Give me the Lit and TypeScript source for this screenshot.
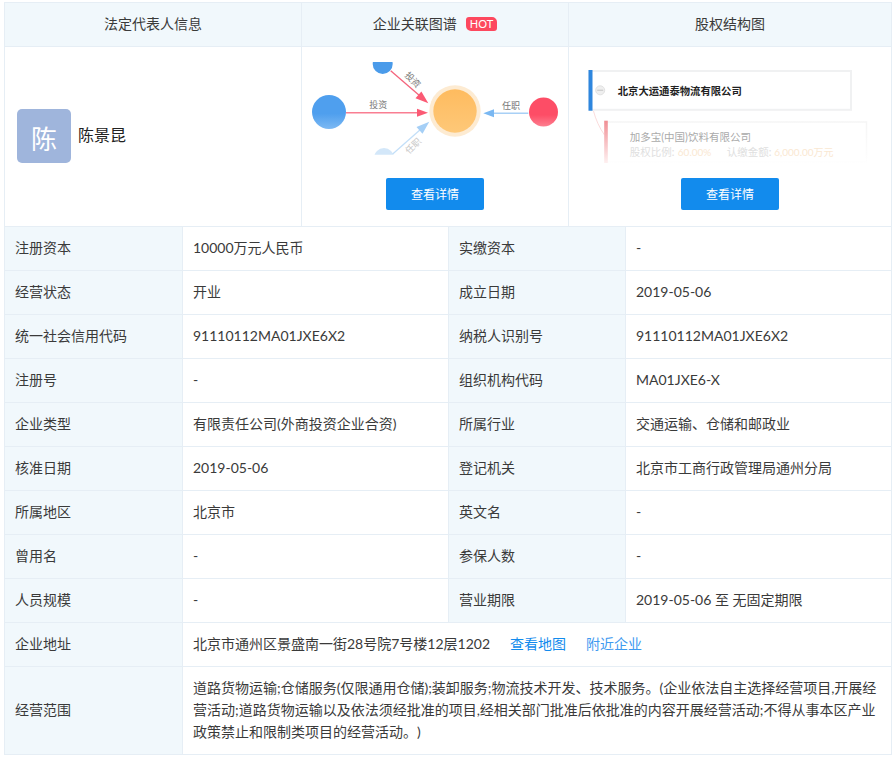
import { LitElement, html, css, svg } from "lit";
import { customElement } from "lit/decorators.js";

const rows: [string, string, string, string][] = [
  ["注册资本", "10000万元人民币", "实缴资本", "-"],
  ["经营状态", "开业", "成立日期", "2019-05-06"],
  ["统一社会信用代码", "91110112MA01JXE6X2", "纳税人识别号", "91110112MA01JXE6X2"],
  ["注册号", "-", "组织机构代码", "MA01JXE6-X"],
  ["企业类型", "有限责任公司(外商投资企业合资)", "所属行业", "交通运输、仓储和邮政业"],
  ["核准日期", "2019-05-06", "登记机关", "北京市工商行政管理局通州分局"],
  ["所属地区", "北京市", "英文名", "-"],
  ["曾用名", "-", "参保人数", "-"],
  ["人员规模", "-", "营业期限", "2019-05-06 至 无固定期限"],
];

const graph = svg`
  <defs>
    <linearGradient id="gb" x1="0" y1="0" x2="0" y2="1"><stop offset="0.55" stop-color="#4f9fee"/><stop offset="1" stop-color="#7db9f3"/></linearGradient>
    <linearGradient id="gr" x1="0" y1="0" x2="0" y2="1"><stop offset="0.6" stop-color="#fd4d66"/><stop offset="1" stop-color="#fd7f90"/></linearGradient>
    <linearGradient id="go" x1="0" y1="0" x2="0" y2="1"><stop offset="0" stop-color="#febb5f"/><stop offset="1" stop-color="#fec878"/></linearGradient>
    <clipPath id="topclip"><rect x="60" y="15" width="40" height="20"/></clipPath>
    <clipPath id="botclip"><rect x="60" y="95" width="40" height="12.700"/></clipPath>
  </defs>
  <circle cx="80.700" cy="17" r="10" fill="#4a9bea" clip-path="url(#topclip)"/>
  <circle cx="82" cy="111" r="10" fill="#d3e7f9" clip-path="url(#botclip)"/>
  <circle cx="27" cy="65" r="17" fill="url(#gb)"/>
  <circle cx="241.500" cy="65" r="14.500" fill="url(#gr)"/>
  <circle cx="153" cy="64" r="25.700" fill="#fdebd2"/>
  <circle cx="153" cy="64" r="21.700" fill="url(#go)"/>
  <line x1="44" y1="65.700" x2="118" y2="65.700" stroke="#f97e92" stroke-width="1.600"/>
  <polygon points="126,65.700 115,61.700 115,69.700" fill="#fb5a74"/>
  <line x1="88.700" y1="23.700" x2="118" y2="49" stroke="#f4647c" stroke-width="1.300"/>
  <polygon points="126.300,56.300 113.500,51.200 119.400,44.400" fill="#fb5a74"/>
  <line x1="90.700" y1="107" x2="119" y2="82" stroke="#c3dff8" stroke-width="1.300"/>
  <polygon points="127.300,74.700 114.500,79.900 120.500,86.700" fill="#a5cff6"/>
  <line x1="226.300" y1="66.300" x2="188" y2="66.300" stroke="#a8d0f6" stroke-width="1.600"/>
  <polygon points="181.300,66.300 192,62.300 192,70.300" fill="#7ab8f2"/>
  <text class="gt" x="76.300" y="61" text-anchor="middle">投资</text>
  <text class="gt" x="209" y="62" text-anchor="middle">任职</text>
  <text class="gt" x="110.700" y="36" text-anchor="middle" transform="rotate(45 110.700 33)">投资</text>
  <text class="gt light" x="111.300" y="102" text-anchor="middle" transform="rotate(-45 111.300 99)">任职</text>
`;

const equity = svg`
  <defs>
    <linearGradient id="fade" x1="0" y1="0" x2="0" y2="1"><stop offset="0" stop-color="#f08e94"/><stop offset="1" stop-color="#fef0f0"/></linearGradient>
    <linearGradient id="fadeb" x1="0" y1="0" x2="0" y2="1"><stop offset="0" stop-color="#f5f5f5"/><stop offset="1" stop-color="#fefefe"/></linearGradient>
  </defs>
  <rect x="20" y="24" width="261.500" height="38.800" fill="#fff" stroke="#f0f1f2" stroke-width="2"/>
  <rect x="19" y="23" width="4" height="40.700" fill="#2e86de"/>
  <circle cx="30.700" cy="43.300" r="4.500" fill="#efefef" stroke="#e2e2e2"/>
  <rect x="27.700" y="42.600" width="6" height="1.400" fill="#d0d0d0"/>
  <path d="M24 64 C26 72 30 81 35 88" fill="none" stroke="#fbdcdc"/>
  <rect x="36" y="75" width="261" height="40" fill="#fff" stroke="url(#fadeb)" stroke-width="1.500"/>
  <rect x="34.700" y="73.700" width="3.600" height="42.300" fill="url(#fade)"/>
  <text class="eq1" x="48.300" y="48.400">北京大运通泰物流有限公司</text>
  <text class="eq2" x="60.300" y="94">加多宝(中国)饮料有限公司</text>
  <text class="eq3" x="60.300" y="109">股权比例:</text>
  <text class="eq4" x="108.300" y="109">60.00%</text>
  <text class="eq3" x="157.300" y="109">认缴金额:</text>
  <text class="eq4" x="204.700" y="109">6,000.00万元</text>
`;

@customElement("app-root")
export class AppRoot extends LitElement {
  static styles = css`
    :host {
      display: block;
      width: 896px;
      height: 759px;
      background: #fff;
      font-family: "Lato", "Noto Sans CJK SC", sans-serif;
      font-size: 14px;
      color: #3a3a3a;
      box-sizing: border-box;
      padding: 2px 4px 0 4px;
      text-spacing-trim: space-all;
    }
    .wrap {
      width: 888px;
      border: 1px solid #e6eef5;
      border-width: 1px 1px 0 1px;
      box-sizing: border-box;
    }
    .top {
      display: grid;
      grid-template-columns: 296px 267px 1fr;
    }
    .head {
      height: 44px;
      box-sizing: border-box;
      padding-bottom: 4px;
      background: #f1f8fc;
      border-bottom: 1px solid #e6eef5;
      display: flex;
      align-items: center;
      justify-content: center;
      gap: 9px;
    }
    .sep { border-left: 1px solid #e6eef5; }
    .hot {
      background: #fd485e;
      color: #fff;
      font-size: 11px;
      line-height: 14px;
      height: 14px;
      margin-top: 3px;
      padding: 0 4px;
      border-radius: 3px;
      border-top-right-radius: 5px;
      border-bottom-left-radius: 5px;
    }
    .body {
      height: 180px;
      border-bottom: 1px solid #e6eef5;
      box-sizing: border-box;
    }
    .person {
      display: flex;
      align-items: center;
      padding: 0 0 2px 12px;
      gap: 7px;
      font-size: 16px;
      color: #222;
    }
    .person span { margin-bottom: 4px; }
    .avatar {
      width: 54px;
      height: 54px;
      box-sizing: border-box;
      padding-top: 3px;
      background: #9fb5dc;
      border-radius: 5px;
      color: #fff;
      font-size: 26px;
      display: flex;
      align-items: center;
      justify-content: center;
    }
    .chart {
      display: flex;
      flex-direction: column;
      align-items: center;
    }
    svg { display: block; }
    .chart svg { height: 131px; width: 100%; }
    .btn {
      width: 98px;
      height: 32px;
      box-sizing: border-box;
      padding-bottom: 2px;
      background: #128bed;
      color: #fff;
      border-radius: 2px;
      font-size: 12px;
      display: flex;
      align-items: center;
      justify-content: center;
    }
    .gt { font-size: 9px; fill: #777; }
    .gt.light { fill: #c8c8c8; }
    .eq1 { font-size: 10.330px; font-weight: 700; fill: #222; }
    .eq2 { font-size: 10.500px; fill: #aaa; }
    .eq3 { font-size: 10.500px; fill: #e0e0e0; }
    .eq4 { font-size: 10px; fill: #fae8d2; }
    .row {
      display: grid;
      grid-template-columns: 178px 266px 177px 1fr;
      border-bottom: 1px solid #e6eef5;
      height: 44px;
      box-sizing: border-box;
    }
    .row.wide { grid-template-columns: 178px 1fr; }
    .row.scope { height: 88px; }
    .cell {
      display: flex;
      align-items: center;
      padding: 0 10px 2px;
      box-sizing: border-box;
      line-height: 22px;
    }
    .lab {
      background: #f1f8fc;
      border-right: 1px solid #e6eef5;
    }
    .val { border-right: 1px solid #e6eef5; }
    .val:last-child { border-right: 0; }
    a { color: #128bed; text-decoration: none; margin-left: 20px; }
    a.lt { color: #3f9af0; }
  `;

  render() {
    return html`
      <div class="wrap">
        <div class="top">
          <div class="head">法定代表人信息</div>
          <div class="head sep">企业关联图谱 <span class="hot">HOT</span></div>
          <div class="head sep">股权结构图</div>
          <div class="body person"><div class="avatar">陈</div><span>陈景昆</span></div>
          <div class="body sep chart">
            <svg viewBox="0 0 266 131">${graph}</svg>
            <div class="btn">查看详情</div>
          </div>
          <div class="body sep chart">
            <svg viewBox="0 0 321 131">${equity}</svg>
            <div class="btn">查看详情</div>
          </div>
        </div>
        ${rows.map(
          (r) => html`<div class="row">
            <div class="cell lab">${r[0]}</div>
            <div class="cell val">${r[1]}</div>
            <div class="cell lab">${r[2]}</div>
            <div class="cell val">${r[3]}</div>
          </div>`
        )}
        <div class="row wide">
          <div class="cell lab">企业地址</div>
          <div class="cell val">北京市通州区景盛南一街28号院7号楼12层1202<a href="#">查看地图</a><a class="lt" href="#">附近企业</a></div>
        </div>
        <div class="row wide scope">
          <div class="cell lab">经营范围</div>
          <div class="cell val"><div>道路货物运输;仓储服务(仅限通用仓储);装卸服务;物流技术开发、技术服务。(企业依法自主选择经营项目,开展经营活动;道路货物运输以及依法须经批准的项目,经相关部门批准后依批准的内容开展经营活动;不得从事本区产业政策禁止和限制类项目的经营活动。)</div></div>
        </div>
      </div>
    `;
  }
}
